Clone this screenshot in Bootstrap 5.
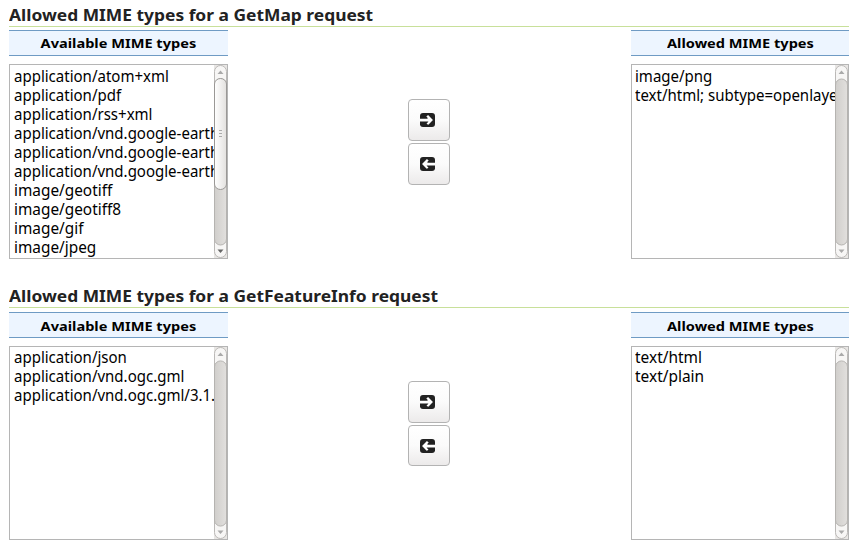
<!DOCTYPE html>
<html lang="en">
<head>
<meta charset="utf-8">
<title>Allowed MIME types</title>
<link href="https://cdn.jsdelivr.net/npm/bootstrap@5.3.0/dist/css/bootstrap.min.css" rel="stylesheet">
<style>
body{background:#fff;color:#000;font-family:"Noto Sans",sans-serif;overflow:hidden}
.page{width:840px;margin:0 0 0 9px;padding-top:4px}
.legend-title{font-size:16px;line-height:22px;height:23px;font-weight:700;color:#222;border-bottom:1px solid #c8e09a;margin:0;white-space:nowrap}
.legend-title span{display:inline-block;transform:scaleX(1.087);transform-origin:0 50%}
.mime-block{height:281px}
.pick{padding-top:3px}
.mime-block + .mime-block .pick{padding-top:4px}
.side-left{width:219px}.side-right{width:218px}
.head{height:26px;line-height:25px;font-size:13px;font-weight:700;background:#edf5ff;border-top:1px solid #6f9bc4;border-bottom:1px solid #6f9bc4;margin-bottom:8px}
.head span{display:inline-block;transform:scaleX(1.122)}
.listbox{height:195px;border:1px solid #b5b5b5}
.items{padding:2px 0 0 4px;line-height:19px;font-size:16px;overflow:hidden;white-space:nowrap;min-width:0}
.side-right .items{padding-left:3px}
.mime-block + .mime-block .listbox{height:194px}
.mime-block + .mime-block .items{padding-top:1px}
.mime-block + .mime-block .head{line-height:26px}
.items div{height:19px}
.items span{display:inline-block;transform:scaleX(.938);transform-origin:0 50%}
.items .image-type span{transform:scaleX(.96)}
.items .text-type span{transform:scaleX(.965)}
.bar{width:13px;flex:none;background:#e8e6e4;overflow:hidden}
.bar svg{display:block;height:100%}
.arrows{padding-top:69px;gap:2px;width:42px;margin-left:180px}
.arrow-btn{width:42px;height:42px;border:1px solid #b3b3b3;border-radius:4px;background:linear-gradient(#fff,#fbfbfb 50%,#eceaea);padding:0 4px 0 0}
.mime-block + .mime-block .arrow-btn:last-child{height:41px}
</style>
<script src="https://cdn.jsdelivr.net/npm/bootstrap@5.3.0/dist/js/bootstrap.bundle.min.js"></script>
</head>
<body>
<svg width="0" height="0" class="position-absolute" aria-hidden="true">
<defs>
<linearGradient id="trough"><stop offset="0" stop-color="#d0cecb"/><stop offset="1" stop-color="#e2e0de"/></linearGradient>
<linearGradient id="thumb"><stop offset="0" stop-color="#fff"/><stop offset="1" stop-color="#e3e1df"/></linearGradient>
<symbol id="idle" viewBox="0 0 13 193" preserveAspectRatio="none">
<rect x=".5" y=".5" width="12" height="192" rx="6" fill="#f7f6f5" stroke="#bbb9b7"/>
<path d="M.5 20A6 6 0 0 1 12.500 20V174A6 6 0 0 1 .5 174Z" fill="url(#trough)" stroke="#b5b3b0"/>
<path d="M3.500 9L6.500 5.500L9.500 9ZM3.500 184.500L6.500 188L9.500 184.500Z" fill="#aaa"/>
</symbol>
<symbol id="active" viewBox="0 0 13 193">
<rect x=".5" y=".5" width="12" height="192" rx="6" fill="#f7f6f5" stroke="#bbb9b7"/>
<path d="M.5 20A6 6 0 0 1 12.500 20V174A6 6 0 0 1 .5 174Z" fill="url(#trough)" stroke="#b5b3b0"/>
<path d="M.5 19A6 5.500 0 0 1 12.500 19V119A6 5.500 0 0 1 .5 119Z" fill="url(#thumb)" stroke="#9a9896"/>
<path d="M5 65.500H8M5 68.500H8M5 71.500H8" stroke="#aaa"/>
<path d="M3.500 9L6.500 5.500L9.500 9Z" fill="#aaa"/><path d="M3.500 184.500L6.500 188L9.500 184.500Z" fill="#666"/>
</symbol>
<symbol id="arrow" viewBox="0 0 15 14">
<path d="M3 0H12Q15 0 15 3V11Q15 14 12 14H3Q0 14 0 11V9H8V12L12.800 7L8 2V5H0V3Q0 0 3 0Z" fill="#222"/>
<path d="M0 5.800H8.500L6.300 3.600L7.800 2.200L12.700 7.100L7.800 12L6.300 10.600L8.500 8.400H0Z" fill="#fff"/>
<path d="M0 8.400H8.500L6.300 10.600L7.500 11.700L8.200 11V12H0Z" fill="#222"/><path d="M0 4.500H6.500L8 5.800H0Z" fill="#222"/>
</symbol>
</defs>
</svg>
<main class="page">
<section class="mime-block">
<h2 class="legend-title"><span>Allowed MIME types for a GetMap request</span></h2>
<div class="pick d-flex">
<div class="side-left">
<div class="head text-center"><span>Available MIME types</span></div>
<div class="listbox d-flex">
<div class="items flex-grow-1">
<div><span>application/atom+xml</span></div><div><span>application/pdf</span></div><div><span>application/rss+xml</span></div><div><span>application/vnd.google-earth.kml+xml</span></div><div><span>application/vnd.google-earth.kmz</span></div><div><span>application/vnd.google-earth.kmz+xml</span></div><div class="image-type"><span>image/geotiff</span></div><div class="image-type"><span>image/geotiff8</span></div><div class="image-type"><span>image/gif</span></div><div class="image-type"><span>image/jpeg</span></div>
</div>
<div class="bar"><svg width="13" height="193"><use href="#active"/></svg></div>
</div>
</div>
<div class="arrows d-flex flex-column">
<button class="arrow-btn d-flex align-items-center justify-content-center" aria-label="Add"><svg width="15" height="14"><use href="#arrow"/></svg></button>
<button class="arrow-btn d-flex align-items-center justify-content-center" aria-label="Remove"><svg width="15" height="14"><use href="#arrow" transform="translate(15 0) scale(-1 1)"/></svg></button>
</div>
<div class="side-right ms-auto">
<div class="head text-center"><span>Allowed MIME types</span></div>
<div class="listbox d-flex">
<div class="items flex-grow-1"><div><span>image/png</span></div><div><span>text/html; subtype=openlayers</span></div></div>
<div class="bar"><svg width="13" height="193"><use href="#idle"/></svg></div>
</div>
</div>
</div>
</section>
<section class="mime-block">
<h2 class="legend-title"><span>Allowed MIME types for a GetFeatureInfo request</span></h2>
<div class="pick d-flex">
<div class="side-left">
<div class="head text-center"><span>Available MIME types</span></div>
<div class="listbox d-flex">
<div class="items flex-grow-1"><div><span>application/json</span></div><div><span>application/vnd.ogc.gml</span></div><div><span>application/vnd.ogc.gml/3.1.1</span></div></div>
<div class="bar"><svg width="13" height="193"><use href="#idle"/></svg></div>
</div>
</div>
<div class="arrows d-flex flex-column">
<button class="arrow-btn d-flex align-items-center justify-content-center" aria-label="Add"><svg width="15" height="14"><use href="#arrow"/></svg></button>
<button class="arrow-btn d-flex align-items-center justify-content-center" aria-label="Remove"><svg width="15" height="14"><use href="#arrow" transform="translate(15 0) scale(-1 1)"/></svg></button>
</div>
<div class="side-right ms-auto">
<div class="head text-center"><span>Allowed MIME types</span></div>
<div class="listbox d-flex">
<div class="items flex-grow-1"><div class="text-type"><span>text/html</span></div><div class="text-type"><span>text/plain</span></div></div>
<div class="bar"><svg width="13" height="193"><use href="#idle"/></svg></div>
</div>
</div>
</div>
</section>
</main>
</body>
</html>
